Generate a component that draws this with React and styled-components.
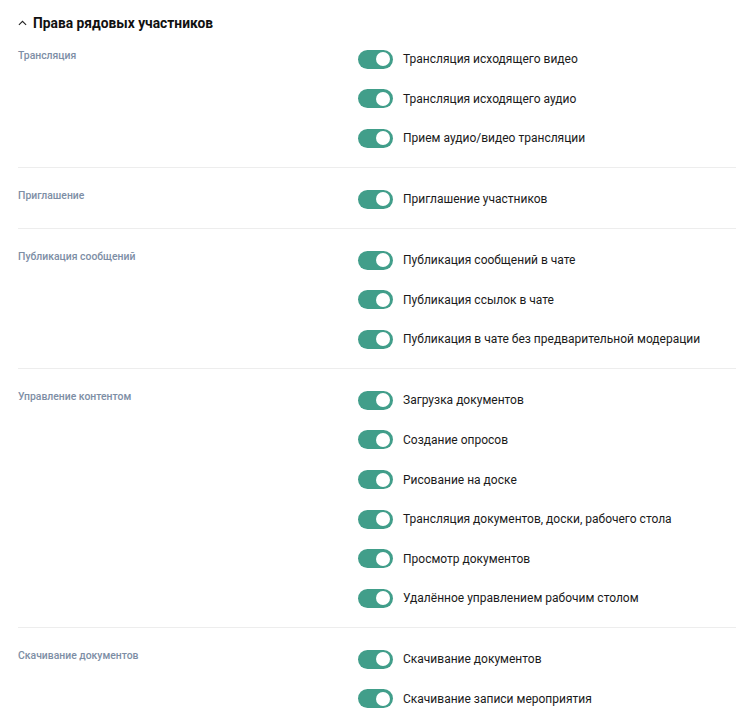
import styled, { createGlobalStyle } from "styled-components";

const GlobalStyle = createGlobalStyle`
  body {
    margin: 0;
    background: #fff;
    font-family: Roboto, "Liberation Sans", sans-serif;
  }
`;

const sections = [
  {
    title: "Трансляция",
    items: [
      "Трансляция исходящего видео",
      "Трансляция исходящего аудио",
      "Прием аудио/видео трансляции",
    ],
  },
  { title: "Приглашение", items: ["Приглашение участников"] },
  {
    title: "Публикация сообщений",
    items: [
      "Публикация сообщений в чате",
      "Публикация ссылок в чате",
      "Публикация в чате без предварительной модерации",
    ],
  },
  {
    title: "Управление контентом",
    items: [
      "Загрузка документов",
      "Создание опросов",
      "Рисование на доске",
      "Трансляция документов, доски, рабочего стола",
      "Просмотр документов",
      "Удалённое управлением рабочим столом",
    ],
  },
  {
    title: "Скачивание документов",
    items: ["Скачивание документов", "Скачивание записи мероприятия"],
  },
];

export default function App() {
  return (
    <Page>
      <GlobalStyle />
      <Header>
        <Chevron viewBox="0 0 10 6" aria-hidden="true">
          <path d="M1 5.2L5 1.2L9 5.2" />
        </Chevron>
        <Title>Права рядовых участников</Title>
      </Header>
      {sections.map((section, i) => (
        <Section key={section.title} $first={i === 0}>
          <SectionTitle>{section.title}</SectionTitle>
          <Rows>
            {section.items.map((item) => (
              <Row key={item}>
                <Toggle $on>
                  <Knob />
                </Toggle>
                <RowLabel>{item}</RowLabel>
              </Row>
            ))}
          </Rows>
        </Section>
      ))}
    </Page>
  );
}

const Page = styled.div`
  padding: 12px 0 0 18px;
`;

const Header = styled.div`
  display: flex;
  align-items: center;
  gap: 6px;
  height: 21px;
  margin-bottom: 16px;
`;

const Chevron = styled.svg`
  width: 9px;
  height: 6px;
  fill: none;
  stroke: #222;
  stroke-width: 1.2;
`;

const Title = styled.h2`
  margin: 0;
  font-size: 13.8px;
  font-weight: 700;
  color: #111;
`;

const Section = styled.div`
  display: grid;
  grid-template-columns: 340px 1fr;
  padding: ${(p) => (p.$first ? "0 0 19px" : "21px 0 19px")};
  border-top: ${(p) => (p.$first ? "none" : "1px solid #ededed")};
`;

const SectionTitle = styled.div`
  font-size: 10.4px;
  line-height: 14px;
  color: #7d8ea5;
  font-weight: 500;
`;

const Rows = styled.div`
  display: flex;
  flex-direction: column;
  gap: 19.6px;
`;

const Row = styled.div`
  display: flex;
  align-items: center;
  gap: 10px;
  height: 20px;
`;

const Toggle = styled.div`
  width: 35px;
  height: 19px;
  border-radius: 10px;
  background: ${(p) => (p.$on ? "#419e8a" : "#c8cfd8")};
  display: flex;
  align-items: center;
  justify-content: ${(p) => (p.$on ? "flex-end" : "flex-start")};
  padding: 0 3px;
  box-sizing: border-box;
  flex-shrink: 0;
`;

const Knob = styled.div`
  width: 14px;
  height: 14px;
  border-radius: 50%;
  background: #fff;
`;

const RowLabel = styled.span`
  font-size: 12px;
  color: #1a1a1a;
`;
